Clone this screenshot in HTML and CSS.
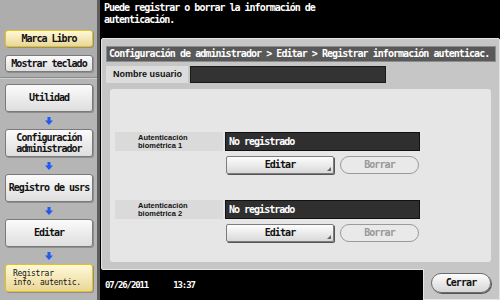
FILE: index.html
```html
<!DOCTYPE html>
<html>
<head>
    <meta charset="utf-8">
    <title>Registrar información autenticac.</title>
    <link rel="stylesheet" href="styles.css">
</head>
<body>
    <div class="screen">
        <div class="sidebar">
            <div class="side-top">
                <div class="side-btn yellow">Marca Libro</div>
                <div class="side-btn">Mostrar teclado</div>
            </div>
            <div class="side-path">
                <div class="side-btn tall">Utilidad</div>
                <svg class="arrow" width="8" height="8" viewBox="0 0 8 8"><polygon points="2.5,0 5.5,0 5.5,3.5 8,3.5 4,8 0,3.5 2.5,3.5" fill="#1f5bf2"/></svg>
                <div class="side-btn tall two">Configuración<br>administrador</div>
                <svg class="arrow" width="8" height="8" viewBox="0 0 8 8"><polygon points="2.5,0 5.5,0 5.5,3.5 8,3.5 4,8 0,3.5 2.5,3.5" fill="#1f5bf2"/></svg>
                <div class="side-btn tall">Registro de usrs</div>
                <svg class="arrow" width="8" height="8" viewBox="0 0 8 8"><polygon points="2.5,0 5.5,0 5.5,3.5 8,3.5 4,8 0,3.5 2.5,3.5" fill="#1f5bf2"/></svg>
                <div class="side-btn tall">Editar</div>
                <svg class="arrow" width="8" height="8" viewBox="0 0 8 8"><polygon points="2.5,0 5.5,0 5.5,3.5 8,3.5 4,8 0,3.5 2.5,3.5" fill="#1f5bf2"/></svg>
                <div class="side-btn tall yellow small">Registrar<br>info. autentic.</div>
            </div>
        </div>

        <div class="main">
            <div class="message">Puede registrar o borrar la información de<br>autenticación.</div>

            <div class="frame">
                <div class="crumbs">Configuración de administrador &gt; Editar &gt; Registrar información autenticac.</div>
                <div class="user-row">
                    <div class="label-box">Nombre usuario</div>
                    <div class="user-field"></div>
                </div>

                <div class="panel">
                    <div class="bio">
                        <div class="bio-row">
                            <div class="bio-label">Autenticación<br>biométrica 1</div>
                            <div class="bio-field">No registrado</div>
                        </div>
                        <div class="bio-actions">
                            <div class="btn edit">Editar</div>
                            <div class="btn pill off">Borrar</div>
                        </div>
                    </div>
                    <div class="bio">
                        <div class="bio-row">
                            <div class="bio-label">Autenticación<br>biométrica 2</div>
                            <div class="bio-field">No registrado</div>
                        </div>
                        <div class="bio-actions">
                            <div class="btn edit">Editar</div>
                            <div class="btn pill off">Borrar</div>
                        </div>
                    </div>
                </div>
            </div>

            <div class="footer">
                <div class="clock"><span>07/26/2011</span><span>13:37</span></div>
                <div class="tab">
                    <div class="btn pill close">Cerrar</div>
                </div>
            </div>
        </div>
    </div>
</body>
</html>
```

FILE: styles.css
```css
body {
    margin: 0;
    padding: 0;
    background-color: #000;
    font-family: 'DejaVu Sans Mono', 'Liberation Mono', monospace;
}
.screen {
    width: 500px;
    height: 300px;
    display: flex;
    overflow: hidden;
}
/* columna izquierda */
.sidebar {
    width: 97px;
    background-color: #b5b5b5;
    border-right: 3px solid #5e5e5e;
    display: flex;
    flex-direction: column;
}
.side-top {
    height: 78px;
    background-color: #adadad;
    border-bottom: 1px solid #8c8c8c;
    box-shadow: 0 1px 0 #d0d0d0;
    padding: 30px 0 0 5px;
    box-sizing: border-box;
    display: flex;
    flex-direction: column;
    gap: 8px;
}
.side-path {
    padding: 6px 0 0 5px;
    display: flex;
    flex-direction: column;
    align-items: flex-start;
}
.side-btn {
    width: 86px;
    height: 15px;
    border: 1px solid #7a7a7a;
    border-radius: 3px;
    background: linear-gradient(#fbfbfb, #dedede);
    box-shadow: 1px 1px 0 #8e8e8e;
    color: #111;
    font-size: 10px;
    font-weight: bold;
    letter-spacing: -1px;
    line-height: 15px;
    text-align: center;
    white-space: nowrap;
}
.side-btn.tall {
    height: 26px;
    line-height: 26px;
}
.side-btn.two {
    line-height: 11px;
    padding-top: 2px;
    height: 24px;
}
.side-btn.yellow {
    border-color: #e3c21b;
    background: linear-gradient(#fff9d8, #e9d797);
}
.side-btn.small {
    font-size: 8px;
    font-weight: normal;
    letter-spacing: -0.3px;
    line-height: 8.5px;
    text-align: left;
    padding: 5px 0 0 7px;
    width: 79px;
    height: 21px;
}
.arrow {
    display: block;
    margin: 5px 0 4px 40px;
}
/* zona principal */
.main {
    flex: 1;
    display: flex;
    flex-direction: column;
}
.message {
    height: 38px;
    box-sizing: border-box;
    padding: 2px 0 0 4px;
    color: #fff;
    font-size: 10px;
    font-weight: bold;
    letter-spacing: -1px;
    line-height: 12px;
}
.frame {
    margin-left: 1px;
    height: 232px;
    box-sizing: border-box;
    background-color: #c6c6c6;
    border: 1px solid #e4e4e4;
    border-radius: 2px 2px 0 2px;
    padding: 7px 3px 0 4px;
}
.crumbs {
    height: 14px;
    background-color: #595959;
    border: 1px solid #8d8d8d;
    color: #fff;
    font-size: 10px;
    font-weight: bold;
    letter-spacing: -0.95px;
    line-height: 14px;
    padding-left: 2px;
    white-space: nowrap;
    overflow: hidden;
}
.user-row {
    display: flex;
    gap: 2px;
    margin-top: 4px;
    height: 17px;
}
.label-box {
    width: 82px;
    background-color: #dcdcdc;
    font-family: 'Liberation Sans', Arial, sans-serif;
    font-weight: bold;
    font-size: 9px;
    line-height: 17px;
    padding-left: 7px;
    box-sizing: border-box;
    color: #111;
}
.user-field {
    width: 194px;
    background-color: #333;
    border: 1px solid #1a1a1a;
}
.panel {
    margin: 6px 5px 0 4px;
    height: 173px;
    box-sizing: border-box;
    background-color: #e6e6e6;
    border-radius: 3px;
    padding: 43px 0 0 5px;
    display: flex;
    flex-direction: column;
    gap: 26px;
}
.bio-row {
    display: flex;
    gap: 2px;
    height: 19px;
}
.bio-label {
    width: 108px;
    background-color: #dadada;
    font-family: 'Liberation Sans', Arial, sans-serif;
    font-weight: bold;
    font-size: 7.5px;
    line-height: 8px;
    padding: 2px 0 0 23px;
    box-sizing: border-box;
    color: #111;
}
.bio-field {
    width: 195px;
    background-color: #2f2f2f;
    border: 1px solid #111;
    box-sizing: border-box;
    color: #fff;
    font-size: 10px;
    font-weight: bold;
    letter-spacing: -1px;
    line-height: 17px;
    padding-left: 3px;
}
.bio-actions {
    display: flex;
    gap: 6px;
    margin: 5px 0 0 111px;
}
.btn {
    height: 18px;
    box-sizing: border-box;
    font-size: 10px;
    font-weight: bold;
    letter-spacing: -0.9px;
    line-height: 16px;
    text-align: center;
    color: #111;
}
.btn.edit {
    position: relative;
    width: 108px;
    border: 1px solid #7c7c7c;
    border-radius: 2px;
    background: linear-gradient(#fdfdfd, #d9d9d9);
    box-shadow: 1px 1px 0 #555;
}
.btn.edit::after {
    content: "";
    position: absolute;
    right: 2px;
    bottom: 2px;
    border-left: 4px solid transparent;
    border-bottom: 4px solid #666;
}
.btn.pill {
    border-radius: 9px;
}
.btn.off {
    width: 79px;
    border: 1px solid #9a9a9a;
    background-color: #e9e9e9;
    color: #999;
}
/* pie */
.footer {
    flex: 1;
    display: flex;
    justify-content: space-between;
}
.clock {
    color: #fff;
    font-size: 9px;
    font-weight: bold;
    letter-spacing: -1.1px;
    padding: 10px 0 0 5px;
    display: flex;
    gap: 25px;
}
.tab {
    width: 77px;
    margin-top: -1px;
    background-color: #c6c6c6;
    border: 1px solid #e4e4e4;
    border-top: none;
    padding: 4px 0 0 7px;
    box-sizing: border-box;
}
.btn.close {
    width: 60px;
    height: 20px;
    line-height: 18px;
    border: 1px solid #6c6c6c;
    background: linear-gradient(#fdfdfd, #d6d6d6);
    box-shadow: 1px 1px 0 #555;
    border-radius: 10px;
}
```
